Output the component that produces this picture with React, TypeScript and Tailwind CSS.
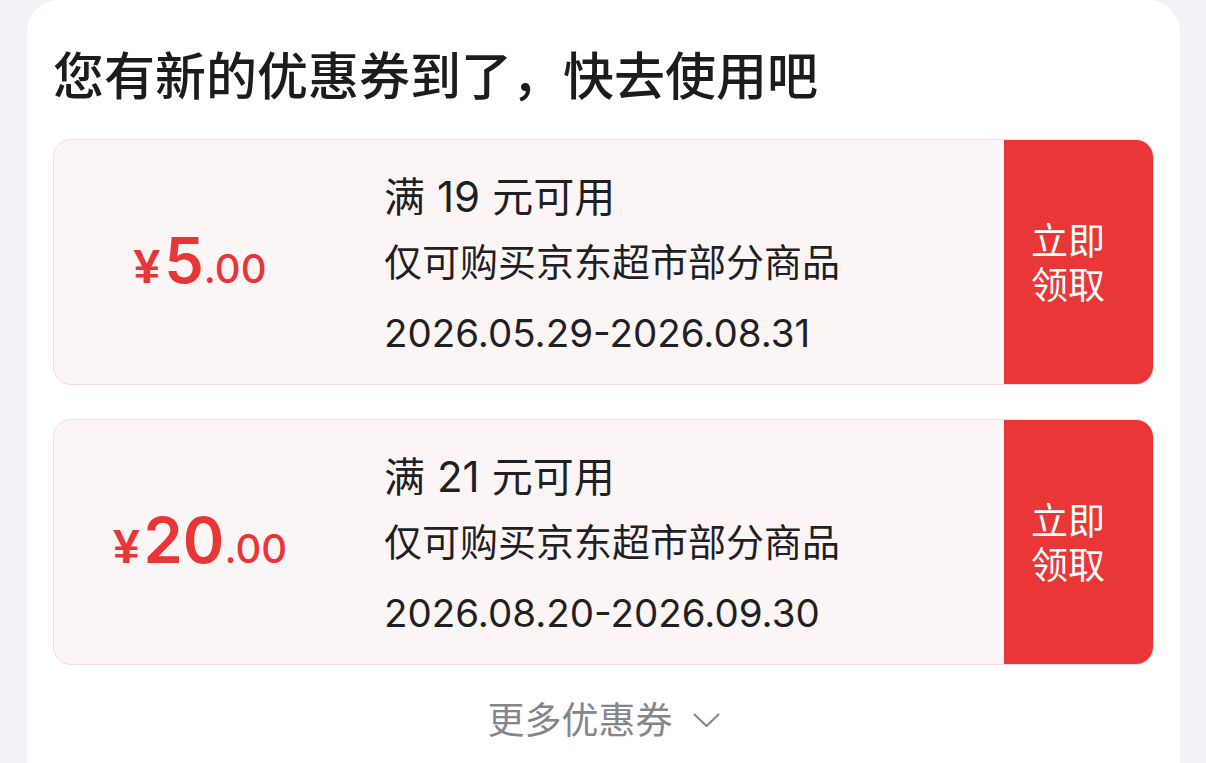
type Coupon = {
  amount: string;
  threshold: string;
  scope: string;
  period: string;
};

const coupons: Coupon[] = [
  { amount: "5", threshold: "19", scope: "仅可购买京东超市部分商品", period: "2026.05.29-2026.08.31" },
  { amount: "20", threshold: "21", scope: "仅可购买京东超市部分商品", period: "2026.08.20-2026.09.30" },
];

const font = { fontFamily: '"Inter", "Noto Sans CJK SC", sans-serif' };

function CouponCard({ coupon }: { coupon: Coupon }) {
  return (
    <div className="flex h-[246px] overflow-hidden rounded-[18px] border border-[#f6d9de] bg-[#fcf5f6]">
      <div className="flex w-[292px] shrink-0 items-center justify-center pb-[4px] text-[#e83636]">
        <div className="flex items-baseline font-semibold">
          <span className="text-[48px] leading-none font-bold" style={{ fontFamily: '"Liberation Sans", sans-serif' }}>
            ¥
          </span>
          <span className="ml-[4px] text-[63px] leading-none">{coupon.amount}</span>
          <span className="text-[40px] leading-none font-medium">.00</span>
        </div>
      </div>
      <div className="flex flex-1 flex-col justify-center pl-[38px] pt-[12px] text-[#1f1f24]">
        <div className="text-[41px] leading-[65px]">
          满<span className="mx-[12px] text-[42px]">{coupon.threshold}</span>元可用
        </div>
        <div className="text-[38px] leading-[65px]">{coupon.scope}</div>
        <div className="text-[38.5px] leading-[77px]">{coupon.period}</div>
      </div>
      <button className="flex w-[149px] shrink-0 flex-col justify-center bg-[#e93636] pl-[27px] pt-[4px] text-left text-[37px] leading-[44px] text-white">
        <span>立即</span>
        <span>领取</span>
      </button>
    </div>
  );
}

export default function App() {
  return (
    <div className="min-h-[763px] bg-[#f2f3f7] pl-[27px] pr-[26px]" style={font}>
      <div className="min-h-[790px] rounded-[32px] bg-white px-[26px] pt-[42px]">
        <h1 className="mb-[27px] text-[51px] leading-[70px] font-medium text-[#1c1c1e]">
          您有新的优惠券到了，快去使用吧
        </h1>
        <div className="flex flex-col gap-[34px]">
          {coupons.map((c) => (
            <CouponCard key={c.period} coupon={c} />
          ))}
        </div>
        <div className="mt-[29px] flex items-center justify-center text-[#85868c]">
          <span className="text-[37px] leading-[53px]">更多优惠券</span>
          <svg className="ml-[20px]" width="27" height="15" viewBox="0 0 27 15" fill="none">
            <polyline points="1.5,1.5 13.5,13 25.5,1.5" stroke="currentColor" strokeWidth="2" strokeLinecap="round" strokeLinejoin="round" />
          </svg>
        </div>
      </div>
    </div>
  );
}
